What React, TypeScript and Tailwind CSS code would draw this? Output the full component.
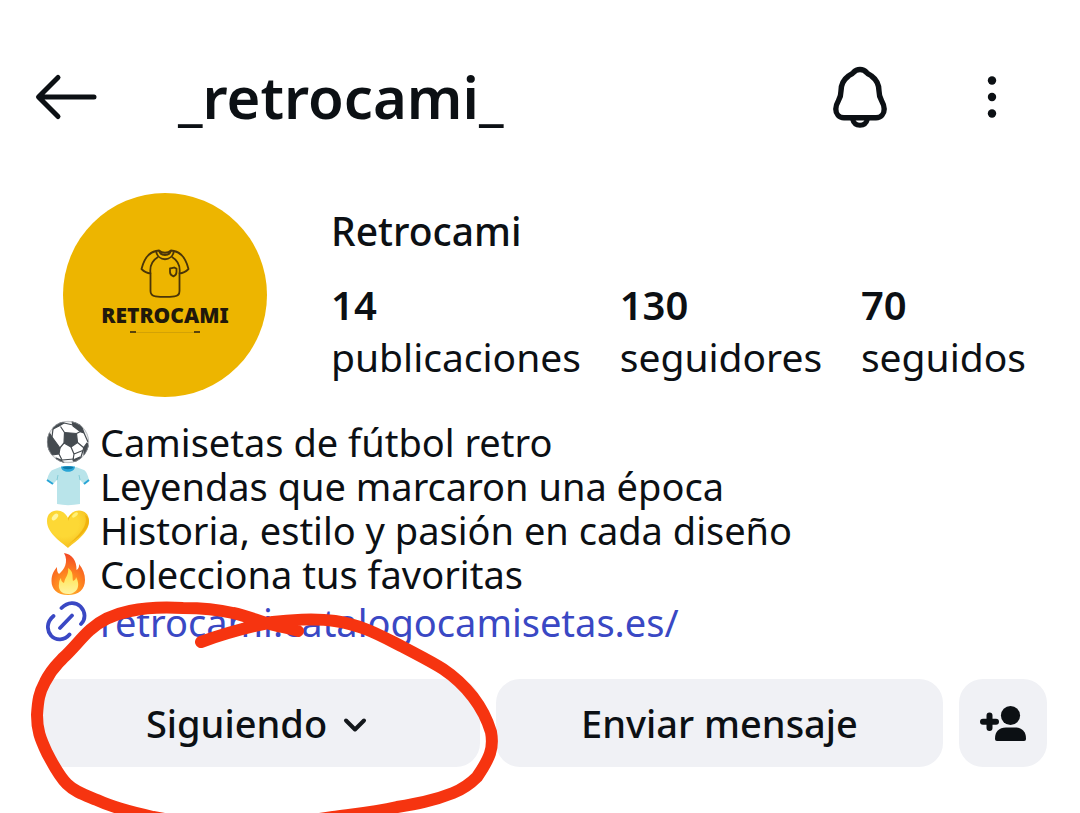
import type { ReactNode } from "react";

function BackArrow() {
  return (
    <svg viewBox="0 0 64 48" className="h-12 w-16" fill="none" stroke="#0c1014" strokeWidth="5" strokeLinecap="round" strokeLinejoin="round" aria-hidden="true">
      <path d="M24 4.500 4.500 24 24 43.500M5 24h55" />
    </svg>
  );
}

function Bell() {
  return (
    <svg viewBox="0 0 60 64" className="h-16 w-15" fill="none" stroke="#0c1014" strokeWidth="5.400" strokeLinejoin="round" aria-hidden="true">
      <path d="M30 4.500c-3 0-5 1.200-7 3.300-1.500 1.500-3 2-4.500 3.200C13 15 11 20 11 26c0 4-.8 6.500-2.500 9.500-1.700 3-2.700 5-2.700 8.500 0 5 3.200 8.800 8.200 8.800h32c5 0 8.200-3.800 8.200-8.800 0-3.500-1-5.500-2.700-8.500-1.700-3-2.500-5.500-2.500-9.500 0-6-2-11-7.500-15-1.500-1.200-3-1.700-4.500-3.200-2-2.100-4-3.300-7-3.300Z" />
      <path d="M22.500 54c1 4.300 3.800 6.200 7.500 6.200s6.500-1.900 7.500-6.200" strokeWidth="5" />
    </svg>
  );
}

function Dots() {
  return (
    <svg viewBox="0 0 16 48" className="h-12 w-4" fill="#0c1014" aria-hidden="true">
      <circle cx="8" cy="7.500" r="4.200" />
      <circle cx="8" cy="24" r="4.200" />
      <circle cx="8" cy="40.500" r="4.200" />
    </svg>
  );
}

function Jersey() {
  return (
    <svg viewBox="0 0 50 50" className="h-[50px] w-[50px]" fill="none" stroke="#4a3508" strokeWidth="1.800" strokeLinejoin="round" aria-hidden="true">
      <path d="M16 2C9 3.500 4 10 1.500 20c2.500 2.500 5.500 4.200 9 4.500V42c0 4 2 5 5 5.300 6 .7 13 .7 19 0 3.500-.3 5-1.500 5-5.300V24.500c3.500-.3 6.500-2 9-4.500C46 10 41 3.500 34 2l-3-.500c-3 3-9 3-12 0Z" />
      <path d="M16 2c2 11 16 11 18 0M19 1.500c1.500 6 10.500 6 12 0M10.500 24.500C9.500 17 13 11 18 8M39.500 24.500C40.500 17 37 11 32 8" />
      <path d="M30 19.500c2-.3 3.500-.8 4.200-1 .8.500 1.500.8 2.300 1v3.500c0 2-1 3.500-3 4.300-2.300-.8-3.500-2.300-3.500-4.300Z" />
    </svg>
  );
}

function Soccer() {
  return (
    <svg viewBox="0 0 44 44" className="h-11 w-11" aria-hidden="true">
      <defs>
        <clipPath id="ball"><circle cx="22" cy="22" r="21" /></clipPath>
        <radialGradient id="ballShade" cx=".5" cy=".5" r=".52">
          <stop offset=".82" stopColor="#fff" /><stop offset="1" stopColor="#d2d4d5" />
        </radialGradient>
      </defs>
      <circle cx="22" cy="22" r="21" fill="url(#ballShade)" />
      <g clipPath="url(#ball)" fill="#454b50" stroke="#454b50" strokeWidth="1.200" strokeLinejoin="round">
        <path d="m18.500 12.500 12 1 1 9-6.500 4.500-7-4Z" />
        <path d="M7 5 13 1l5 2-5 3-6 3Z" />
        <path d="m26 1 9 4 3 8-3-1-8-6Z" />
        <path d="m2 11 4 6 8 11-1 6-7 1-6-9Z" />
        <path d="m38 27 3-4 2 4-5 8Z" />
        <path d="m27 40 7-3 2 1-7 5Z" />
        <path d="m10 38 5 2 4 4h-8Z" />
        <path fill="none" d="m18.500 12.500-4-6M30.500 13.500l4-2M31.500 22.500l6 5M25 27l3 7M18 23l-5 6M13 34l3 6M38 27l-3 10M38 13l4 9M6 17l1-8M27 5l-9-2M16 40l12-1M28 34l-1 6M28 34l10-4" />
      </g>
      <circle cx="22" cy="22" r="20.700" fill="none" stroke="#a4a8ab" strokeWidth=".6" />
    </svg>
  );
}

function TShirt() {
  return (
    <svg viewBox="0 0 44 44" className="h-11 w-11" aria-hidden="true">
      <path d="M14 3 6.500 6C4 7 1.800 12 1 16l6 4 4-4v24c7 1.500 15 1.500 23 0V16l4 4 5-4c-1-5-3-9-5-10l-8-3c-4 2-12 2-16 0Z" fill="#b9e4ea" />
      <path d="M15 2.500c4-.7 10-.7 14 0 0 7-14 7-14 0Z" fill="#29a5d6" />
      <path d="M16.500 3c3-.6 8-.6 11 0-1 3-10 3-11 0Z" fill="#0d79a8" />
      <path d="m1 16 6 4M43 16l-5 4" stroke="#29a5d6" strokeWidth="2" />
      <path d="m11 16 1-5M34 16l-1-5" stroke="#82cbd7" strokeWidth="1" />
    </svg>
  );
}

function Heart() {
  return (
    <svg viewBox="0 0 44 44" className="h-11 w-11" aria-hidden="true">
      <defs>
        <radialGradient id="gold" cx=".4" cy=".35" r=".7">
          <stop offset=".5" stopColor="#fdd835" /><stop offset="1" stopColor="#f5bd1d" />
        </radialGradient>
      </defs>
      <path d="M22 40C17 35 1 26 1 13 1 6 5.500 2.500 11 2.500c5 0 9 3 11 7.500 2-4.500 6-7.500 11-7.500 5.500 0 10 3.500 10 10.500 0 13-16 22-21 27Z" fill="url(#gold)" />
      <path d="M39 7c4 11-7 21-17 30 5-4 21-13 21-24 0-3-1.500-5-4-6ZM22 13c1-3 3-6 6-8-3 1-5 3-6 5Z" fill="#eda600" opacity=".65" />
      <ellipse cx="9" cy="9" rx="4" ry="2.300" transform="rotate(-48 9 9)" fill="#fff59d" />
      <ellipse cx="29" cy="7" rx="3.500" ry="1.600" transform="rotate(-40 29 7)" fill="#fff176" />
    </svg>
  );
}

function Flame() {
  return (
    <svg viewBox="0 0 44 44" className="h-11 w-11" aria-hidden="true">
      <defs>
        <radialGradient id="fire" cx=".5" cy=".9" r=".85">
          <stop offset="0" stopColor="#ffb62e" /><stop offset=".45" stopColor="#ff8a20" /><stop offset="1" stopColor="#f44b24" />
        </radialGradient>
        <linearGradient id="core" x1=".5" y1="0" x2=".5" y2="1">
          <stop offset="0" stopColor="#ffdf3c" /><stop offset="1" stopColor="#fff3a0" />
        </linearGradient>
      </defs>
      <path d="M18 1c8 1 13 8 12.500 17 2-1 3-4 2.500-6 4 5 6 10 6 16 0 9-6 15-17 15C11 43 5.500 37 5.500 29c0-7 3-11 5.500-14 0 3 0 5 2 7 5-4 10-12 5-21Z" fill="url(#fire)" />
      <path d="M22 16c6 4 4 8 5 13 2-1 3-2 3-4 5 9 1 17-8 17-7 0-10-5-9-10 0-3 1-5 2-6 0 3 1 4 3 5 1-6 5-8 4-15Z" fill="url(#core)" />
    </svg>
  );
}

function LinkIcon() {
  return (
    <svg viewBox="0 0 44 44" className="h-11 w-11" fill="none" stroke="#3a48c4" strokeWidth="3.800" strokeLinecap="round" aria-hidden="true">
      <path d="M14 28 26 15.500M15.500 8C22 1.500 30 2 34.500 6.500 39.500 12 40 19 35 24M7.500 16C.5 22 .5 30 5 35.500c5 5.500 13.500 5 18.500-1" />
    </svg>
  );
}

function Chevron() {
  return (
    <svg viewBox="0 0 24 16" className="mt-1 h-4 w-6" fill="none" stroke="#14181c" strokeWidth="4" strokeLinecap="round" strokeLinejoin="round" aria-hidden="true">
      <path d="m3 3.500 9 9 9-9" />
    </svg>
  );
}

function AddPerson() {
  return (
    <svg viewBox="0 0 48 40" className="h-10 w-12" fill="#0c1014" aria-hidden="true">
      <circle cx="31.500" cy="12.500" r="9.600" />
      <path d="M16 35.500C16 28.500 20 24.500 27 24.500h9c7 0 11 4 11 11 0 1.700-.7 2.500-2 2.500H18c-1.300 0-2-.8-2-2.500Z" />
      <path d="M10.500 12.500v12.500M4 18.800h13" stroke="#0c1014" strokeWidth="6" strokeLinecap="round" />
    </svg>
  );
}

function Stat({ value, label }: { value: string; label: string }) {
  return (
    <a href="#stats" className="flex flex-col">
      <span className="text-[40px] leading-[52px] font-semibold">{value}</span>
      <span className="text-[39px] leading-[52px]">{label}</span>
    </a>
  );
}

function BioLine({ icon, children }: { icon: ReactNode; children: ReactNode }) {
  return (
    <li className="flex h-11 items-center gap-[10px]">
      {icon}
      <span>{children}</span>
    </li>
  );
}

function Annotation() {
  return (
    <svg viewBox="0 0 520 240" className="pointer-events-none absolute top-[590px] left-0 h-[240px] w-[520px]" fill="none" strokeLinecap="round" strokeLinejoin="round" aria-hidden="true">
      <path d="M28 86H46C37 104 37 120 37 125C37 140 40 148 47 163L58 184H28Z" fill="#fff" />
      <path stroke="#f63410" strokeWidth="12" d="M201 52C223 44 248 37 273 32C287 30 315 28 335 31C363 35 383 47 403 57C420 66 432 72 443 79C458 89 466 98 473 107C483 120 488 132 491 142C494 158 490 168 477 187C470 194 463 199 453 203C433 211 415 214 397 217C375 222 355 224 333 227C270 237 200 236 153 227C130 222 112 217 97 210C85 205 75 202 67 194C58 185 52 172 47 163C40 148 37 140 37 125C38 110 39 103 45 92C52 78 57 75 63 68C72 60 82 47 90 40C102 29 115 24 130 21C148 17 165 17 183 18C205 18 220 20 233 23C248 26 258 31 270 34C280 37 290 38 298 41" />
    </svg>
  );
}

export default function App() {
  return (
    <main className="relative min-h-screen overflow-hidden bg-white font-['Noto_Sans',sans-serif] text-[#0c1014]">
      <header className="flex h-[193px] items-center pr-20 pl-[34px]">
        <button aria-label="Volver"><BackArrow /></button>
        <h1 className="ml-20 flex-1 text-[58px] leading-[72px] font-semibold">_retrocami_</h1>
        <button aria-label="Notificaciones"><Bell /></button>
        <button aria-label="Más opciones" className="ml-[94px]"><Dots /></button>
      </header>

      <section className="flex items-start pr-[54px] pl-[63px]">
        <div className="flex h-[204px] w-[204px] shrink-0 flex-col items-center rounded-full bg-[#edb500] pt-[56px]">
          <Jersey />
          <span className="text-[21px] leading-8 font-black text-[#21180b]">RETROCAMI</span>
          <div className="flex w-[70px] items-center">
            <span className="h-[2px] w-[6px] bg-[#5a430b]" />
            <span className="h-px flex-1 bg-[#d3a205]" />
            <span className="h-[2px] w-[6px] bg-[#5a430b]" />
          </div>
        </div>
        <div className="ml-16 flex-1 pt-3">
          <h2 className="text-[39px] leading-[52px] font-medium">Retrocami</h2>
          <div className="mt-[22px] flex justify-between">
            <Stat value="14" label="publicaciones" />
            <Stat value="130" label="seguidores" />
            <Stat value="70" label="seguidos" />
          </div>
        </div>
      </section>

      <section className="mt-[23px] px-[46px] text-[38px] leading-[44px]">
        <ul>
          <BioLine icon={<Soccer />}>Camisetas de fútbol retro</BioLine>
          <BioLine icon={<TShirt />}>Leyendas que marcaron una época</BioLine>
          <BioLine icon={<Heart />}>Historia, estilo y pasión en cada diseño</BioLine>
          <BioLine icon={<Flame />}>Colecciona tus favoritas</BioLine>
        </ul>
        <a href="#catalogo" className="mt-1 flex h-11 items-center gap-[10px] text-[#3a48c4]">
          <LinkIcon />
          <span>retrocami.catalogocamisetas.es/</span>
        </a>
      </section>

      <section className="mt-[35px] flex gap-4 px-[33px] text-[38px] leading-[52px] font-medium">
        <button className="flex h-[88px] flex-1 items-center justify-center gap-4 rounded-3xl bg-[#f0f1f5]">
          Siguiendo
          <Chevron />
        </button>
        <button className="h-[88px] flex-1 rounded-3xl bg-[#f0f1f5]">Enviar mensaje</button>
        <button aria-label="Sugerencias" className="flex h-[88px] w-[88px] items-center justify-center rounded-3xl bg-[#f0f1f5]">
          <AddPerson />
        </button>
      </section>
      <Annotation />
    </main>
  );
}
